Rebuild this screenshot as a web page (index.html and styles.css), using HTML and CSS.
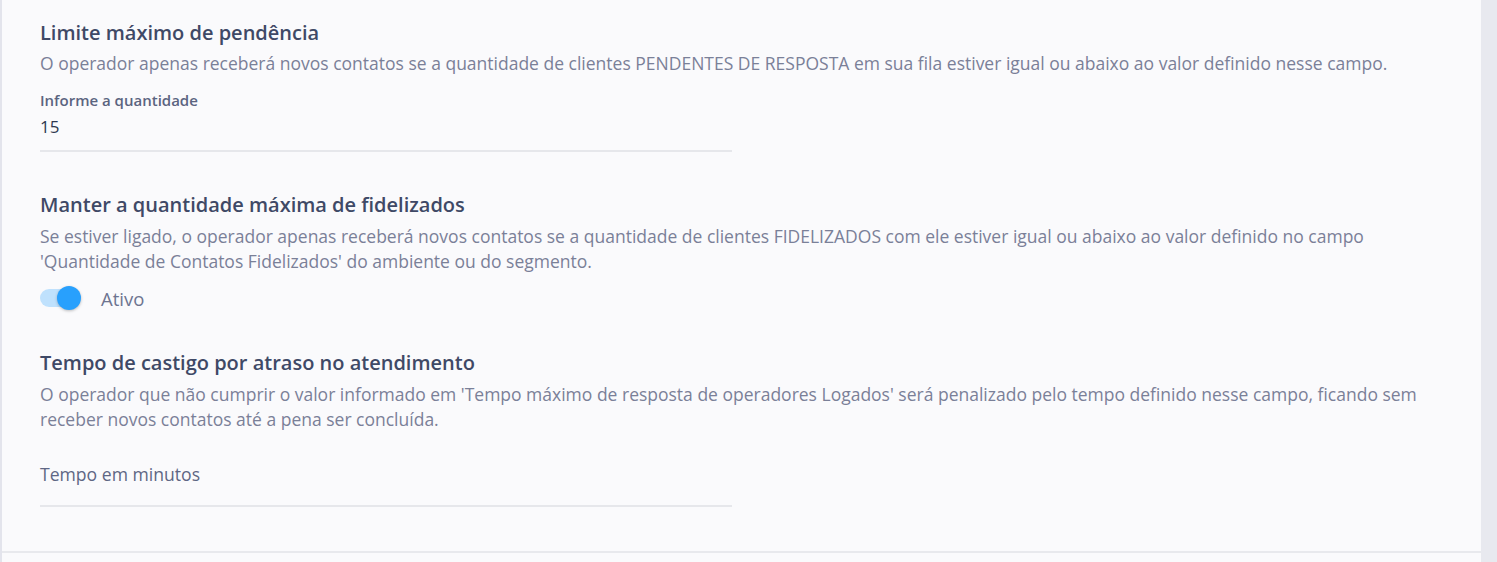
FILE: index.html
```html
<!DOCTYPE html>
<html lang="pt-BR">
<head>
<meta charset="utf-8">
<link rel="stylesheet" href="styles.css">
</head>
<body>
<div class="page">
  <div class="card">
    <div class="content">
      <section class="block">
        <h2 class="title">Limite máximo de pendência</h2>
        <p class="desc">O operador apenas receberá novos contatos se a quantidade de clientes PENDENTES DE RESPOSTA em sua fila estiver igual ou abaixo ao valor definido nesse campo.</p>
        <div class="field">
          <label class="label">Informe a quantidade</label>
          <div class="value">15</div>
        </div>
      </section>
      <section class="block b2">
        <h2 class="title">Manter a quantidade máxima de fidelizados</h2>
        <p class="desc">Se estiver ligado, o operador apenas receberá novos contatos se a quantidade de clientes FIDELIZADOS com ele estiver igual ou abaixo ao valor definido no campo 'Quantidade de Contatos Fidelizados' do ambiente ou do segmento.</p>
        <div class="switch-row">
          <span class="switch"><span class="track"></span><span class="thumb"></span></span>
          <span class="switch-label">Ativo</span>
        </div>
      </section>
      <section class="block b3">
        <h2 class="title">Tempo de castigo por atraso no atendimento</h2>
        <p class="desc">O operador que não cumprir o valor informado em 'Tempo máximo de resposta de operadores Logados' será penalizado pelo tempo definido nesse campo, ficando sem receber novos contatos até a pena ser concluída.</p>
        <div class="field field-empty">
          <div class="placeholder">Tempo em minutos</div>
        </div>
      </section>
    </div>
    <div class="footer"></div>
  </div>
  <div class="side"></div>
</div>
</body>
</html>
```
FILE: styles.css
```css
* { box-sizing: border-box; }
html, body { margin: 0; padding: 0; }
body {
  font-family: "Open Sans", "Noto Sans", sans-serif;
  background: #e8e9ef;
  width: 1497px;
  height: 562px;
  overflow: hidden;
}
.page {
  display: flex;
  height: 562px;
}
.card {
  width: 1481px;
  background: #fafafc;
  border-left: 2px solid #e3e4ec;
  display: flex;
  flex-direction: column;
}
.content {
  padding: 19px 40px 0 38px;
  height: 551px;
}
.block { margin: 0; }
.title {
  margin: 0;
  font-size: 20px;
  font-weight: 600;
  line-height: 28px;
  color: #3f4966;
}
.desc {
  margin: 4px 0 0;
  font-size: 17.5px;
  line-height: 25px;
  color: #7a8098;
}
.field {
  width: 692px;
  border-bottom: 2px solid #e6e7eb;
}
.field .label {
  display: block;
  margin-top: 14px;
  font-size: 15px;
  font-weight: 600;
  line-height: 20px;
  color: #5b6480;
}
.field .value {
  font-size: 17px;
  line-height: 24px;
  color: #2e3850;
  padding: 5px 0 11px;
}
.b2 { margin-top: 39px; }
.b2 .desc, .b3 .desc { margin-top: 5px; }
.switch-row {
  display: flex;
  align-items: center;
  margin-top: 11px;
  height: 26px;
}
.switch {
  position: relative;
  width: 42px;
  height: 24px;
  display: inline-block;
}
.track {
  position: absolute;
  left: 0;
  top: 3px;
  width: 40px;
  height: 18px;
  border-radius: 9px;
  background: #bfe1fd;
}
.thumb {
  position: absolute;
  left: 17px;
  top: 0;
  width: 24px;
  height: 24px;
  border-radius: 50%;
  background: #28a0fd;
  box-shadow: 0 1px 3px rgba(0,0,0,0.25);
}
.switch-label {
  margin-left: 19px;
  font-size: 18.5px;
  color: #6d7490;
}
.b3 { margin-top: 38px; }
.field-empty { margin-top: 30px; }
.placeholder {
  font-size: 17.6px;
  line-height: 24px;
  color: #5e6684;
  padding: 0 0 19px;
}
.footer {
  border-top: 2px solid #e8e9ed;
  flex: 1;
}
.side { flex: 1; }
```
